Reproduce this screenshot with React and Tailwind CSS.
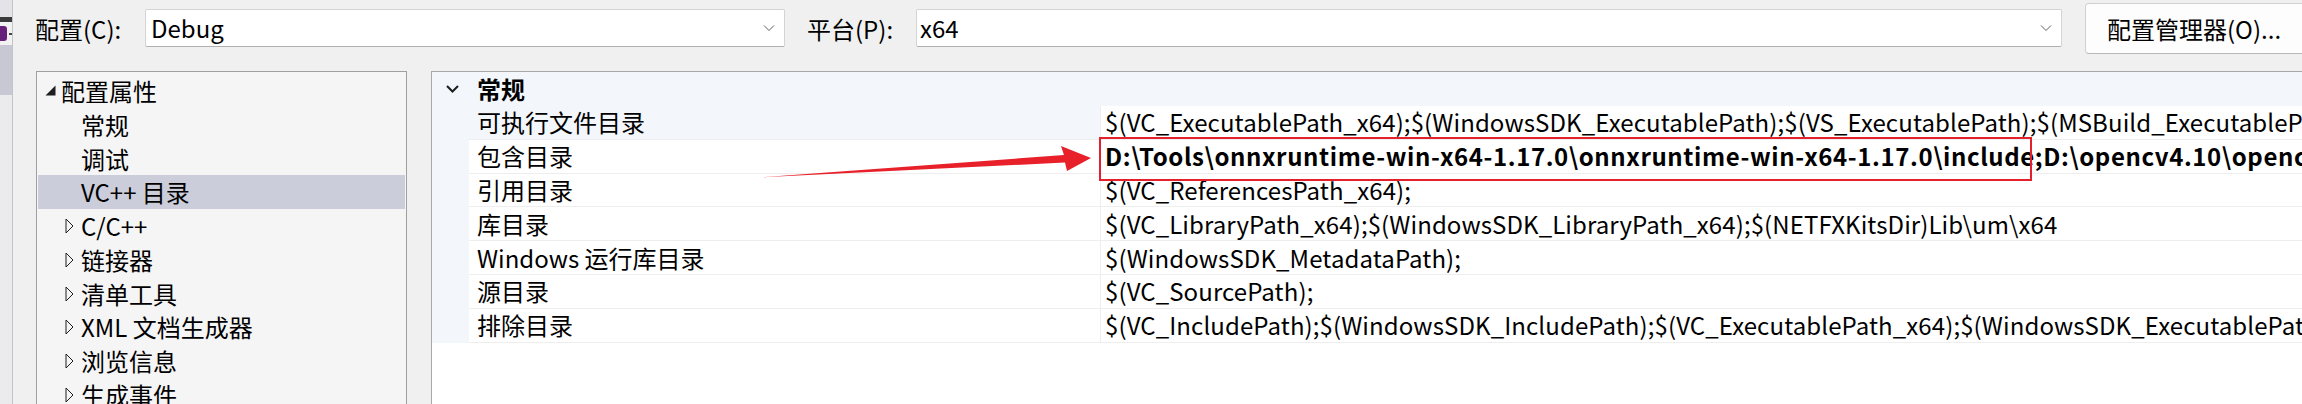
import React from 'react';

const tree = [
  { label: '配置属性', level: 0, icon: 'open' },
  { label: '常规', level: 1 },
  { label: '调试', level: 1 },
  { label: 'VC++ 目录', level: 1, selected: true },
  { label: 'C/C++', level: 1, icon: 'closed' },
  { label: '链接器', level: 1, icon: 'closed' },
  { label: '清单工具', level: 1, icon: 'closed' },
  { label: 'XML 文档生成器', level: 1, icon: 'closed' },
  { label: '浏览信息', level: 1, icon: 'closed' },
  { label: '生成事件', level: 1, icon: 'closed' },
];

const props = [
  {
    name: '可执行文件目录',
    value: '$(VC_ExecutablePath_x64);$(WindowsSDK_ExecutablePath);$(VS_ExecutablePath);$(MSBuild_ExecutablePath);$(FxCopDir);$(PATH);',
    tinted: true,
  },
  {
    name: '包含目录',
    value: 'D:\\Tools\\onnxruntime-win-x64-1.17.0\\onnxruntime-win-x64-1.17.0\\include;D:\\opencv4.10\\opencv\\build\\include;$(IncludePath)',
    bold: true,
  },
  { name: '引用目录', value: '$(VC_ReferencesPath_x64);' },
  { name: '库目录', value: '$(VC_LibraryPath_x64);$(WindowsSDK_LibraryPath_x64);$(NETFXKitsDir)Lib\\um\\x64' },
  { name: 'Windows 运行库目录', value: '$(WindowsSDK_MetadataPath);' },
  { name: '源目录', value: '$(VC_SourcePath);' },
  {
    name: '排除目录',
    value: '$(VC_IncludePath);$(WindowsSDK_IncludePath);$(VC_ExecutablePath_x64);$(WindowsSDK_ExecutablePath);$(MSBuild_ExecutablePath);',
  },
];

function Chevron() {
  return (
    <svg width="12" height="8" viewBox="0 0 12 8" className="shrink-0">
      <path d="M1 1.5 L6 6.5 L11 1.5" fill="none" stroke="#606060" strokeWidth="1" />
    </svg>
  );
}

function TreeIcon({ kind }) {
  if (kind === 'open') {
    return (
      <svg width="11" height="11" viewBox="0 0 11 11">
        <polygon points="10.5,0.5 10.5,10.5 0.5,10.5" fill="#1e1e1e" />
      </svg>
    );
  }
  if (kind === 'closed') {
    return (
      <svg width="9" height="16" viewBox="0 0 9 16">
        <polygon points="1,1 8,8 1,15" fill="none" stroke="#1e1e1e" strokeWidth="1" />
      </svg>
    );
  }
  return null;
}

export default function App() {
  return (
    <div className="relative w-[2302px] h-[404px] overflow-hidden bg-[#f0f0f0] flex text-black font-['Noto_Sans_CJK_SC',sans-serif] text-[24px]">
      {/* strip of the window behind */}
      <div className="w-[13px] shrink-0 flex flex-col border-r border-[#c4c4c8]">
        <div className="h-[17px] bg-[#e4e4e8]" />
        <div className="h-[5px] bg-[#3a3a3a]" />
        <div className="h-[23px] bg-[#f2f2f2] flex items-center">
          <div className="w-[7px] h-[15px] bg-[#68217a] rounded-r-[3px]" />
          <div className="ml-[2px] w-[3px] h-[2px] bg-[#444]" />
        </div>
        <div className="h-[50px] bg-[#c8c8d4]" />
        <div className="flex-1 bg-[#ebebee]" />
      </div>

      <div className="flex-1 flex flex-col min-w-0">
        {/* top bar */}
        <div className="h-[71px] shrink-0 flex items-start">
          <div className="ml-[22px] mt-[10px] w-[110px] shrink-0 leading-[38px] whitespace-nowrap">配置(C):</div>
          <div className="mt-[9px] w-[640px] h-[38px] shrink-0 bg-white border border-[#d4d4d4] border-b-[#b0b0b0] rounded-[2px] flex items-center pl-[5px] pr-[9px]">
            <span className="flex-1">Debug</span>
            <Chevron />
          </div>
          <div className="ml-[22px] mt-[10px] w-[109px] shrink-0 leading-[38px] whitespace-nowrap">平台(P):</div>
          <div className="mt-[9px] w-[1146px] h-[38px] shrink-0 bg-white border border-[#d4d4d4] border-b-[#b0b0b0] rounded-[2px] flex items-center pl-[3px] pr-[9px]">
            <span className="flex-1">x64</span>
            <Chevron />
          </div>
          <div className="ml-[23px] mt-[3px] w-[260px] h-[51px] shrink-0 bg-[#fdfdfd] border border-[#d0d0d0] border-b-[#b8b8b8] rounded-[4px] flex items-center pl-[21px] whitespace-nowrap">
            配置管理器(O)...
          </div>
        </div>

        <div className="flex-1 flex min-h-0">
          {/* tree */}
          <div className="ml-[23px] w-[371px] shrink-0 border border-[#a0a0a0] border-b-0 bg-[#f5f5f5] pt-[2px] px-px">
            {tree.map((item) => (
              <div
                key={item.label}
                className={`h-[33.8px] flex items-center whitespace-nowrap ${item.selected ? 'bg-[#cbcdda]' : ''}`}
                style={{ paddingLeft: 6 + item.level * 20 }}
              >
                <div className="w-[17px] h-full flex items-center justify-start pl-px">
                  <TreeIcon kind={item.icon} />
                </div>
                <span>{item.label}</span>
              </div>
            ))}
          </div>

          {/* property grid */}
          <div className="ml-[24px] flex-1 min-w-0 border-l border-t border-[#a8a8a8] bg-white flex flex-col">
            <div className="h-[34px] bg-[#f3f6fb] flex items-center">
              <div className="w-[37px] flex justify-center pl-[3px]">
                <svg width="13" height="8" viewBox="0 0 13 8">
                  <path d="M1 1 L6.5 6.5 L12 1" fill="none" stroke="#1e1e1e" strokeWidth="2" />
                </svg>
              </div>
              <span className="ml-[8px] font-bold">常规</span>
            </div>
            {props.map((p) => (
              <div key={p.name} className="h-[33.8px] flex">
                <div className="w-[37px] shrink-0 bg-[#f3f6fb]" />
                <div
                  className={`w-[632px] shrink-0 border-b border-r border-[#eeeeee] flex items-center pl-[8px] whitespace-nowrap ${p.tinted ? 'bg-[#f3f6fb]' : ''}`}
                >
                  {p.name}
                </div>
                <div
                  className={`flex-1 min-w-0 overflow-hidden border-b border-[#eeeeee] flex items-center pl-[4px] whitespace-nowrap ${p.bold ? 'font-bold tracking-[0.6px]' : 'tracking-[0.1px]'}`}
                >
                  {p.value}
                </div>
              </div>
            ))}
            <div className="flex-1 bg-white" />
          </div>
        </div>
      </div>

      {/* annotation: red box and arrow */}
      <div className="absolute left-[1099px] top-[137px] w-[933px] h-[44px] border-2 border-[#e3202c] pointer-events-none" />
      <svg className="absolute left-0 top-0 pointer-events-none" width="2302" height="404" viewBox="0 0 2302 404">
        <polygon
          points="759,177.5 1064,155 1061,146 1091,158 1067,171 1065,162.5"
          fill="#e8202a"
        />
      </svg>
    </div>
  );
}
